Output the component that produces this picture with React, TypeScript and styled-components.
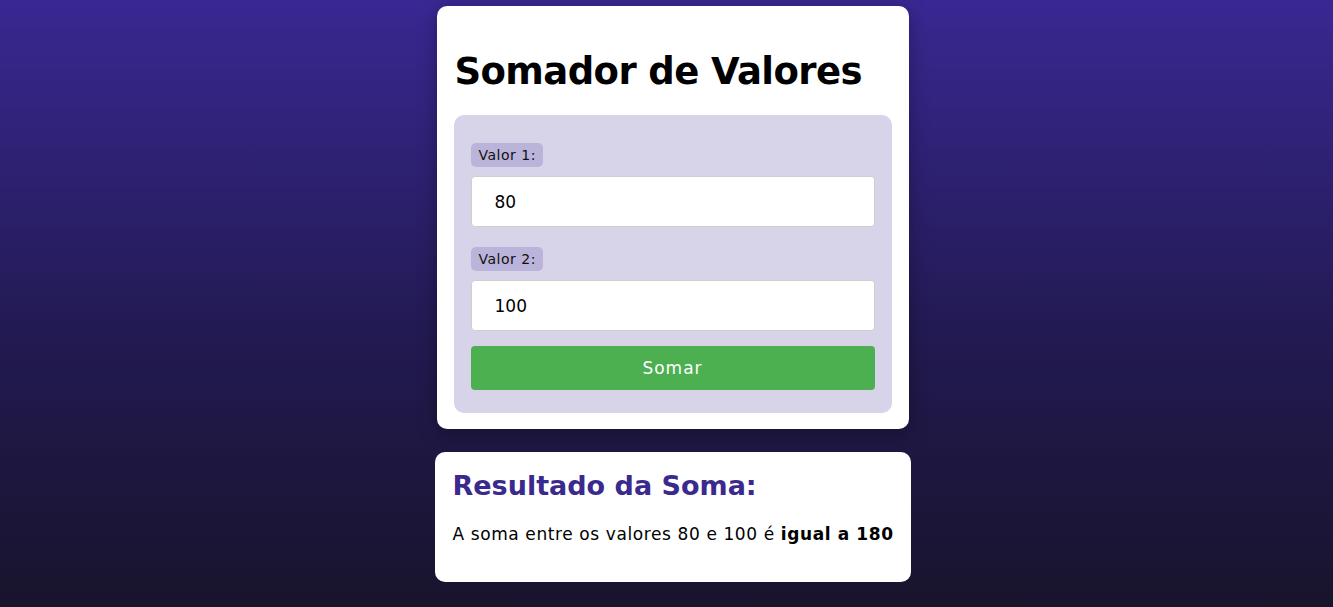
import React, { useState } from "react";
import styled, { createGlobalStyle } from "styled-components";

const Global = createGlobalStyle`
  html, body { margin: 0; padding: 0; }
  body {
    min-height: 607px;
    font-family: "DejaVu Sans", Verdana, sans-serif;
    background: linear-gradient(to bottom, #392893 0%, #221a52 55%, #18142c 100%);
    background-attachment: fixed;
  }
`;

const Page = styled.main`
  display: flex;
  flex-direction: column;
  align-items: center;
  padding: 6px 0 0 12px;
  min-height: 601px;
  box-sizing: border-box;
`;

const Card = styled.section`
  width: 472px;
  box-sizing: border-box;
  background: #ffffff;
  border-radius: 10px;
  padding: 17px 17px 16px;
  box-shadow: 0 4px 20px rgba(0, 0, 0, 0.3);
`;

const Title = styled.h1`
  margin: 27px 0 22px 1px;
  font-size: 37px;
  line-height: 43px;
  letter-spacing: -0.6px;
  font-weight: bold;
  color: #000;
`;

const Panel = styled.form`
  background: #d7d3e8;
  border-radius: 10px;
  padding: 28px 17px 23px;
  display: flex;
  flex-direction: column;
`;

const Label = styled.label`
  align-self: flex-start;
  background: #bab3da;
  border-radius: 5px;
  font-size: 14px;
  letter-spacing: 0.5px;
  line-height: 24px;
  padding: 0 7px 0 8px;
  color: #111;
  margin-bottom: 9px;
`;

const Input = styled.input`
  height: 51px;
  box-sizing: border-box;
  border: 1px solid #cfcfcf;
  border-radius: 4px;
  background: #fff;
  padding: 0 23px;
  font-family: "DejaVu Sans", Verdana, sans-serif;
  font-size: 17px;
  color: #000;
  margin-bottom: ${(p: { $mb: number }) => p.$mb}px;
  outline: none;
`;

const Button = styled.button`
  height: 44px;
  border: none;
  border-radius: 4px;
  background: #4caf50;
  color: #fff;
  font-family: "DejaVu Sans", Verdana, sans-serif;
  font-size: 17px;
  letter-spacing: 1px;
  cursor: pointer;
`;

const ResultCard = styled.section`
  width: 476px;
  box-sizing: border-box;
  margin-top: 23px;
  background: #fff;
  border-radius: 10px;
  padding: 18px 18px 36px;
`;

const ResultTitle = styled.h2`
  margin: 0 0 20px;
  font-size: 27px;
  line-height: 32px;
  font-weight: bold;
  color: #3a2a8e;
`;

const ResultText = styled.p`
  margin: 0;
  font-size: 17px;
  letter-spacing: 0.6px;
  line-height: 24px;
  color: #000;
  white-space: nowrap;
`;

export default function App() {
  const [a, setA] = useState("80");
  const [b, setB] = useState("100");
  return (
    <>
      <Global />
      <Page>
        <Card>
          <Title>Somador de Valores</Title>
          <Panel onSubmit={(e) => e.preventDefault()}>
            <Label htmlFor="v1">Valor 1:</Label>
            <Input id="v1" $mb={20} value={a} onChange={(e) => setA(e.target.value)} />
            <Label htmlFor="v2">Valor 2:</Label>
            <Input id="v2" $mb={15} value={b} onChange={(e) => setB(e.target.value)} />
            <Button type="submit">Somar</Button>
          </Panel>
        </Card>
        <ResultCard>
          <ResultTitle>Resultado da Soma:</ResultTitle>
          <ResultText>
            A soma entre os valores 80 e 100 é <b>igual a 180</b>
          </ResultText>
        </ResultCard>
      </Page>
    </>
  );
}
